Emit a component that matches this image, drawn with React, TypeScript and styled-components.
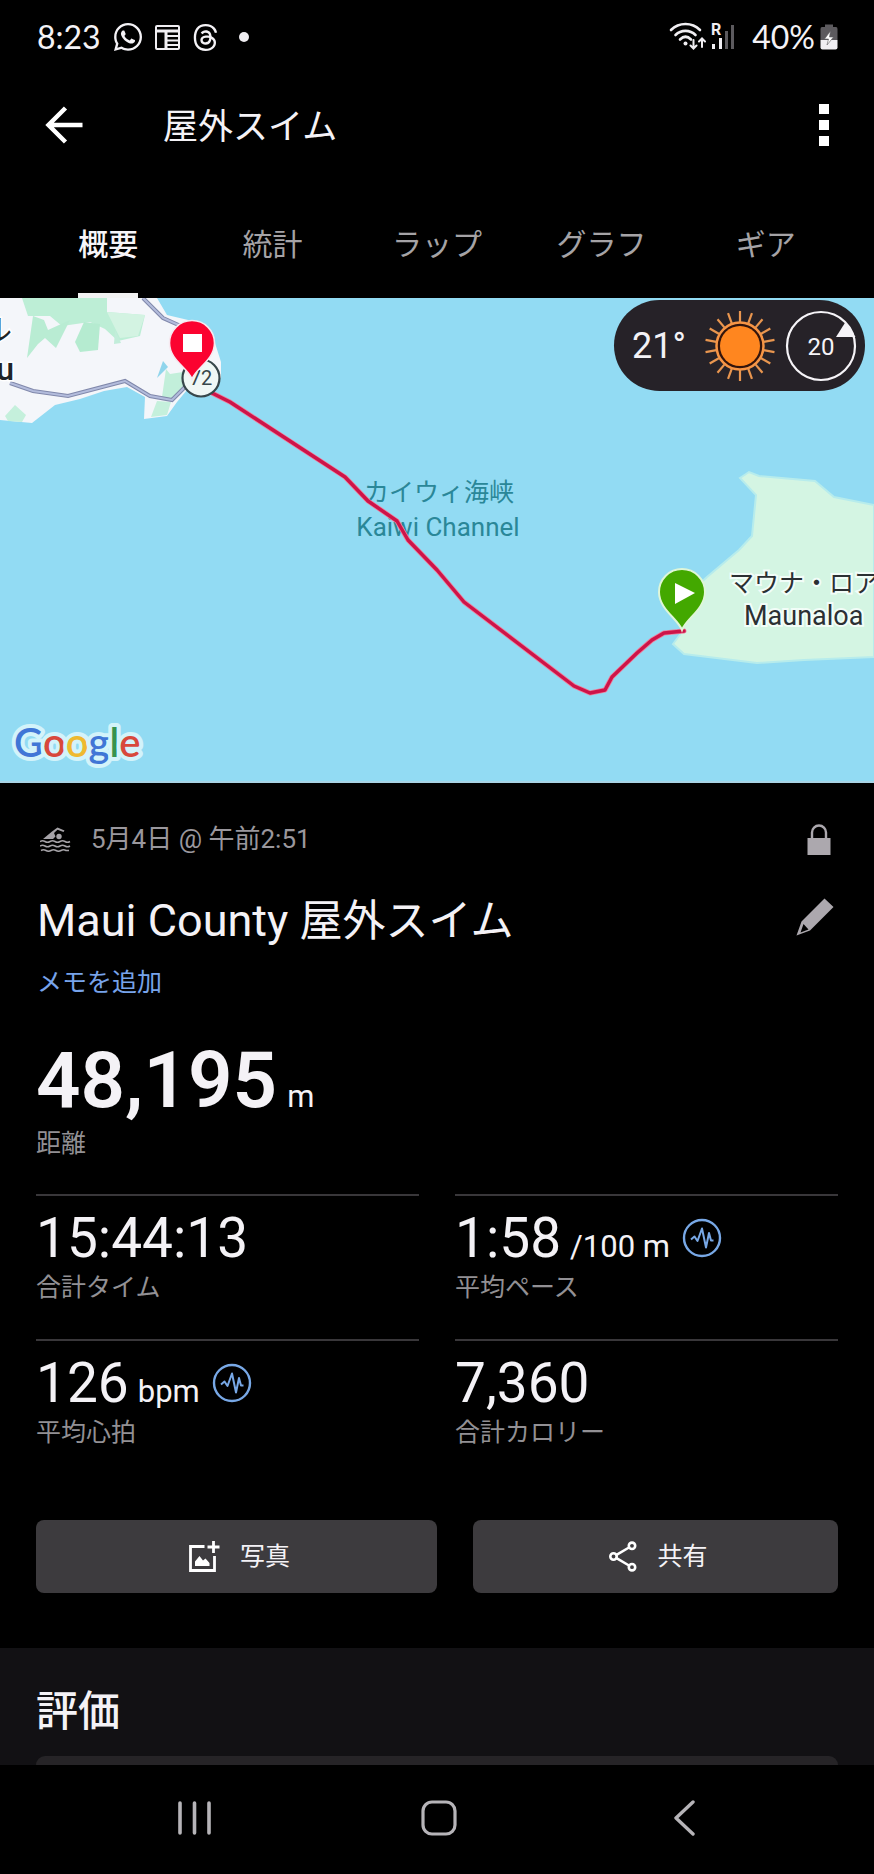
import React from 'react';
import styled, { createGlobalStyle } from 'styled-components';
import { FaWhatsapp, FaThreads } from 'react-icons/fa6';

const GlobalStyle = createGlobalStyle`
  *, *::before, *::after { box-sizing: border-box; }
  html, body { margin: 0; background: #000; }
  body {
    color: #f4f2f6;
    font-family: Roboto, "Noto Sans CJK JP", sans-serif;
  }
  button { font: inherit; color: inherit; background: none; border: 0; padding: 0; cursor: pointer; }
  svg { display: block; flex: none; }
  h1, h2, p, dl, dd { margin: 0; font-weight: 400; }
`;

const Screen = styled.div`
  display: flex;
  flex-direction: column;
  min-height: 100vh;
  background: #000;
`;

const StatusBar = styled.div`
  display: flex;
  justify-content: space-between;
  align-items: center;
  height: 74px;
  padding: 0 36px 0 37px;
  font-family: Lato, sans-serif;
  font-size: 32px;
  line-height: 40px;
`;

const StatusGroup = styled.div<{ $gap: number }>`
  display: flex;
  align-items: center;
  gap: ${(p) => p.$gap}px;
`;

const Percent = styled.span`
  margin-left: 12px;
`;

const AppBar = styled.header`
  display: flex;
  align-items: center;
  height: 102px;
  margin-bottom: 16px;
  padding: 0 36px 0 45px;
`;

const BarTitle = styled.h1`
  flex: 1;
  margin-left: 80px;
  padding-top: 6px;
  font-size: 35px;
  line-height: 48px;
`;

const Tabs = styled.nav`
  display: grid;
  grid-template-columns: repeat(5, 1fr);
  height: 106px;
  padding: 0 26px;
`;

const Tab = styled.button<{ $active?: boolean }>`
  justify-self: center;
  font-size: 30px;
  line-height: 40px;
  font-weight: ${(p) => (p.$active ? 500 : 400)};
  color: ${(p) => (p.$active ? '#f7f5f9' : '#a5a3a6')};
  box-shadow: ${(p) => (p.$active ? 'inset 0 -5px 0 #f2f2f2' : 'none')};
`;

const MapArea = styled.section`
  position: relative;
  height: 485px;
  overflow: hidden;
  background: #92dbf3;
  border-bottom: 2px solid #a9d4e6;
  & > svg { width: 100%; height: 485px; }
`;

const Weather = styled.div`
  position: absolute;
  top: 2px;
  right: 9px;
  display: flex;
  align-items: center;
  height: 91px;
  padding: 0 8px 0 18px;
  border-radius: 46px;
  background: #262228;
  font-size: 36px;
  line-height: 40px;
  & > svg:first-of-type { margin: 0 9px 0 18px; }
`;

const Details = styled.main`
  padding: 32px 36px 55px;
`;

const MetaRow = styled.div`
  display: flex;
  align-items: center;
  height: 48px;
  padding-left: 4px;
  font-size: 26px;
  line-height: 32px;
  color: #9a979d;
`;

const MetaText = styled.p`
  flex: 1;
  margin-left: 20px;
`;

const IconButton = styled.button<{ $inset: number }>`
  margin-right: ${(p) => p.$inset}px;
  color: #aca8ae;
`;

const TitleRow = styled.div`
  display: flex;
  align-items: flex-start;
  justify-content: space-between;
  margin-top: 30px;
  & > button { margin-top: 5px; }
`;

const Title = styled.h2`
  padding-left: 1px;
  font-size: 43px;
  line-height: 56px;
`;

const Latin = styled.span`
  font-size: 45px;
`;

const NoteLink = styled.a`
  display: block;
  width: max-content;
  margin-top: 18px;
  padding-left: 1px;
  font-size: 25px;
  line-height: 32px;
  color: #77a3ea;
  text-decoration: none;
`;

const Total = styled.dl`
  display: flex;
  flex-direction: column-reverse;
  margin: 42px 0 34px;
`;

const TotalValue = styled.dd`
  display: flex;
  align-items: baseline;
  gap: 10px;
  height: 80px;
  margin-bottom: 7px;
  font-size: 78px;
  line-height: 80px;
  font-weight: 600;
`;

const StatGrid = styled.div`
  display: grid;
  grid-template-columns: 1fr 1fr;
  column-gap: 36px;
`;

const Stat = styled.dl`
  display: flex;
  flex-direction: column-reverse;
  padding: 14px 0 35px;
  border-top: 2px solid #39373a;
`;

const StatValue = styled.dd`
  display: flex;
  align-items: baseline;
  gap: 9px;
  height: 56px;
  margin-bottom: 6px;
  font-size: 55px;
  line-height: 56px;
  & > svg { align-self: center; margin-left: 3px; }
`;

const Unit = styled.span`
  font-size: 31px;
  line-height: 40px;
  font-weight: 400;
`;

const Caption = styled.dt`
  font-size: 25px;
  line-height: 32px;
  color: #929094;
`;

const Actions = styled.div`
  display: flex;
  gap: 36px;
  margin-top: 36px;
`;

const Action = styled.button<{ $grow: number }>`
  display: flex;
  flex: ${(p) => p.$grow} 1 0;
  align-items: center;
  justify-content: center;
  gap: 20px;
  height: 73px;
  padding-left: 6px;
  border-radius: 8px;
  background: #3d3b3e;
  font-size: 25px;
  line-height: 32px;
`;

const Rating = styled.section`
  padding: 36px 36px 0;
  background: #121114;
`;

const RatingTitle = styled.h2`
  font-size: 42px;
  line-height: 56px;
  font-weight: 500;
`;

const RatingCard = styled.div`
  height: 9px;
  margin-top: 16px;
  border-radius: 14px 14px 0 0;
  background: #262427;
`;

const NavBar = styled.nav`
  display: grid;
  grid-template-columns: repeat(3, 1fr);
  justify-items: center;
  padding: 35px 68px 38px 72px;
  color: #b6b4b8;
`;

const NewsIcon = () => (
  <svg width="25" height="25" viewBox="0 0 25 25" fill="none" stroke="#f0eef2" strokeWidth="2">
    <rect x="1" y="1" width="23" height="23" rx="1" />
    <path d="M1 6H24" strokeWidth="3" />
    <path d="M11 7V24" strokeWidth="3" />
    <path d="M12 11H24M12 15.500H24M12 20H24" />
  </svg>
);

const WifiIcon = () => (
  <svg width="37" height="30" viewBox="0 0 37 30" fill="none" stroke="#f0eef2" strokeWidth="2.600" strokeLinecap="round">
    <path d="M2 8C10 0 23 0 31 8" />
    <path d="M6.500 13C12 7.500 21 7.500 26.500 13" />
    <path d="M11 17.500C14.500 14 18.500 14 22 17.500" />
    <circle cx="16.500" cy="21.500" r="2" fill="#f0eef2" stroke="none" />
    <path d="M24.500 18V26M21.500 23.500L24.500 26.500L27.500 23.500M33 25V17M30 19.500L33 16.500L36 19.500" strokeWidth="2" />
  </svg>
);

const SignalIcon = () => (
  <svg width="24" height="28" viewBox="0 0 24 28" fill="#f0eef2" overflow="visible">
    <text x="0" y="12" fontFamily="Roboto, sans-serif" fontSize="16" fontWeight="700">R</text>
    <rect x="1" y="21" width="3" height="5" />
    <rect x="8" y="15" width="3" height="11" />
    <rect x="14" y="8" width="3" height="18" fill="#5c5a5e" />
    <rect x="20" y="2" width="3" height="24" fill="#5c5a5e" />
  </svg>
);

const BatteryIcon = () => (
  <svg width="18" height="26" viewBox="0 0 18 26">
    <path d="M5 0.500H13V3H16Q17.500 3 17.500 5V16H0.500V5Q0.500 3 2 3H5Z" fill="#5c5a5e" />
    <path d="M0.500 16H17.500V23.500Q17.500 25.500 15.500 25.500H2.500Q0.500 25.500 0.500 23.500Z" fill="#f0eef2" />
    <path d="M10.500 7L4.500 15H8.500L7 21L13.500 13H9.500Z" fill="#fff" stroke="#5c5a5e" strokeWidth="0.600" />
  </svg>
);

const BackIcon = () => (
  <svg width="38" height="38" viewBox="0 0 38 38" fill="none" stroke="#fff" strokeWidth="4.500">
    <path d="M37.500 19H4M20.500 2L3.500 19L20.500 36" />
  </svg>
);

const MoreIcon = () => (
  <svg width="28" height="42" viewBox="0 0 28 42" fill="#fff">
    <rect x="9" y="0" width="10" height="10" />
    <rect x="9" y="16" width="10" height="10" />
    <rect x="9" y="32" width="10" height="10" />
  </svg>
);

const rays = Array.from({ length: 18 }, (_, i) => i * 20);

const SunIcon = () => (
  <svg width="72" height="72" viewBox="-36 -36 72 72">
    <circle r="23.500" fill="#33150c" stroke="#f79545" strokeWidth="2.500" />
    <circle r="20" fill="#ff861f" />
    {rays.map((angle) => (
      <path key={angle} d="M0 -24V-35" transform={`rotate(${angle})`} stroke="#e9964f" strokeWidth="2.200" />
    ))}
  </svg>
);

const WindIcon = () => (
  <svg width="72" height="72" viewBox="-36 -36 72 72">
    <circle r="34" fill="none" stroke="#f6f4f8" strokeWidth="2.200" />
    <path d="M24.500 -24L34.500 -9H15Z" fill="#f6f4f8" />
    <text x="0" y="9" textAnchor="middle" fontSize="24" fill="#f6f4f8">20</text>
  </svg>
);

const SwimIcon = () => (
  <svg width="31" height="25" viewBox="0 0 31 25" fill="none" stroke="#a6a3a8" strokeWidth="1.500">
    <path d="M3 12L12 4.500L17.500 0.500L24.500 3.500L23.500 5L17.500 2.800L14 6L15.500 9.500L13 12Z" fill="#a6a3a8" stroke="none" />
    <circle cx="19" cy="9.500" r="2.700" fill="#a6a3a8" stroke="none" />
    <path d="M0 14.500Q2.500 13 5 14.500T10 14.500T15 14.500T20 14.500T25 14.500T30 14.500" />
    <path d="M0 19Q2.500 17.500 5 19T10 19T15 19T20 19T25 19T30 19" />
    <path d="M1 23.500Q3.500 22 6 23.500T11 23.500T16 23.500T21 23.500T26 23.500L29 23.500" />
  </svg>
);

const LockIcon = () => (
  <svg width="24" height="31" viewBox="0 0 24 31">
    <path d="M5 15V8.500A7 7 0 0 1 19 8.500V15" fill="none" stroke="currentColor" strokeWidth="2.400" />
    <rect x="0.500" y="14" width="23" height="17" fill="currentColor" />
  </svg>
);

const PencilIcon = () => (
  <svg width="38" height="38" viewBox="0 0 38 38" fill="currentColor">
    <path d="M28.500 0.500L37.500 9L14 32.500L0.500 37.500L5.500 23.500ZM7.500 26L4.500 34.500L12.500 31.500Z" fillRule="evenodd" />
  </svg>
);

const PulseIcon = () => (
  <svg width="40" height="40" viewBox="0 0 40 40" fill="none" stroke="#78a8e6">
    <circle cx="20" cy="20" r="18" strokeWidth="2.400" />
    <path d="M9 21.500L12.500 18.500L15.500 23L20 10.500L24 29.500L27 15L29 22.500H31.500" strokeWidth="2" strokeLinejoin="round" />
  </svg>
);

const AddPhotoIcon = () => (
  <svg width="31" height="31" viewBox="0 0 31 31" fill="none" stroke="#fff" strokeWidth="2.800">
    <path d="M15.500 5.500H1.500V29.500H25.500V15" />
    <path d="M24.500 0V12M18.500 6H30.500" />
    <path d="M6 25V20.500L10.500 15L14 19.500L16.500 17.500L20.500 22V25Z" fill="#fff" stroke="none" />
  </svg>
);

const ShareIcon = () => (
  <svg width="28" height="31" viewBox="0 0 28 31" fill="none" stroke="#fff" strokeWidth="2.600">
    <circle cx="4.500" cy="15.500" r="3.200" />
    <circle cx="23" cy="4.800" r="3.200" />
    <circle cx="23" cy="26.200" r="3.200" />
    <path d="M7.500 13.800L20 6.500M7.500 17.200L20 24.500" />
  </svg>
);

const googleLetters: [string, string][] = [
  ['G', '#4076d6'],
  ['o', '#d8483b'],
  ['o', '#efb92f'],
  ['g', '#4076d6'],
  ['l', '#36934f'],
  ['e', '#d8483b'],
];

const RouteMap = () => (
  <svg viewBox="0 0 874 485" preserveAspectRatio="xMidYMid slice" role="img" aria-label="Kaiwi Channel">
    <path d="M0 0H157L167 17L205 26L215 45L221 64V80L187 92L177 104L167 118L144 121L145 99L127 89L104 93L80 101L55 107L32 125L0 122Z" fill="#f4f6fa" />
    <path d="M22 0H107V14L145 17L140 38L118 43L105 31L90 24L62 28L50 18H28Z" fill="#bdeed6" />
    <path d="M107 14L145 17L138 38L120 40Z" fill="#d3f3e2" />
    <path d="M33 18L44 22L48 32L70 22L56 50L45 40L38 46L27 60Z" fill="#b9ecd3" />
    <path d="M84 24L100 26L98 52L80 54L75 44Z" fill="#b5ebd0" />
    <path d="M115 32L121 45L114 46Z" fill="#c2edda" />
    <path d="M166 71L170 76L183 74V92L172 101L162 99Z" fill="#c2efda" />
    <path d="M157 103L171 104L167 117L151 119Z" fill="#c5f0dc" />
    <path d="M5 118L15 107L26 117L22 124L8 123Z" fill="#c5f0dc" />
    <path d="M163 63L168 69L157 80Z" fill="#8fd5ec" />
    <path d="M143 0L163 20L183 29M10 85L33 93L68 98L125 83L150 98L172 102L185 89" fill="none" stroke="#8088ab" strokeWidth="4" />
    <path d="M143 0L163 20L183 29M10 85L33 93L68 98L125 83L150 98L172 102L185 89" fill="none" stroke="#b3bcdc" strokeWidth="2" />
    <g fill="#202426" stroke="#fff" strokeWidth="3" paintOrder="stroke">
      <text x="12" y="42" textAnchor="end" fontSize="30">ル</text>
      <text x="14" y="82" textAnchor="end" fontSize="32" fontWeight="500">u</text>
    </g>

    <path d="M740 180L749 174L759 178L815 183L834 199L874 207V359L804 362L757 365L684 356L673 346L682 334V302L707 279L739 252L752 238L756 197Z" fill="#d4f5e3" stroke="#b7ecec" strokeWidth="2" />

    <g fill="#2a8798" textAnchor="middle">
      <text x="439" y="203" fontSize="25">カイウィ海峡</text>
      <text x="438" y="238" fontSize="26">Kaiwi Channel</text>
    </g>
    <g fill="#2b3033" stroke="#f2fdf8" strokeWidth="4" paintOrder="stroke">
      <text x="729" y="294" fontSize="25">マウナ・ロア</text>
      <text x="744" y="327" fontSize="27">Maunaloa</text>
    </g>

    <g fill="none" strokeLinejoin="round" strokeLinecap="round">
      <path d="M208 93L230 104L345 179L368 203L397 223L408 242L437 272L464 304L574 388L590 395L605 392L612 379L637 355L652 342L664 335L684 333" stroke="#ee7f9b" strokeWidth="5" />
      <path d="M208 93L230 104L345 179L368 203L397 223L408 242L437 272L464 304L574 388L590 395L605 392L612 379L637 355L652 342L664 335L684 333" stroke="#cd1449" strokeWidth="3.400" />
    </g>

    <circle cx="201" cy="80" r="18.500" fill="#eff7f5" stroke="#37474b" strokeWidth="2.200" />
    <text x="201" y="87" textAnchor="middle" fontSize="20" fill="#37474b">72</text>
    <path d="M192 81C188 70 169.500 62 169.500 45A22.500 22.500 0 0 1 214.500 45C214.500 62 196 70 192 81Z" fill="#fb0330" stroke="#f6e9f0" strokeWidth="1.600" />
    <rect x="183" y="36" width="19" height="18" fill="#fff" />
    <path d="M682 332C678 321 659 311 659 294A23 23 0 0 1 705 294C705 311 686 321 682 332Z" fill="#43a800" stroke="#dff6d8" strokeWidth="2" />
    <path d="M675 285L695 295L675 306Z" fill="#fff" />

    <text x="14" y="459" fontFamily="Lato, sans-serif" fontSize="40" fontWeight="600" stroke="#d3f3fa" strokeWidth="8" strokeLinejoin="round" paintOrder="stroke">
      {googleLetters.map(([letter, color], i) => (
        <tspan key={i} fill={color}>{letter}</tspan>
      ))}
    </text>
  </svg>
);

const tabs = ['概要', '統計', 'ラップ', 'グラフ', 'ギア'];

const stats = [
  { value: '15:44:13', label: '合計タイム' },
  { value: '1:58', unit: '/100 m', pulse: true, label: '平均ペース' },
  { value: '126', unit: 'bpm', pulse: true, label: '平均心拍' },
  { value: '7,360', label: '合計カロリー' },
];

export default function App() {
  return (
    <Screen>
      <GlobalStyle />
      <StatusBar>
        <StatusGroup $gap={11}>
          <span>8:23</span>
          <FaWhatsapp size={32} />
          <NewsIcon />
          <FaThreads size={29} />
          <svg width="26" height="10" viewBox="0 0 26 10"><circle cx="13" cy="5" r="5" fill="#f0eef2" /></svg>
        </StatusGroup>
        <StatusGroup $gap={5}>
          <WifiIcon />
          <SignalIcon />
          <Percent>40%</Percent>
          <BatteryIcon />
        </StatusGroup>
      </StatusBar>

      <AppBar>
        <button aria-label="戻る"><BackIcon /></button>
        <BarTitle>屋外スイム</BarTitle>
        <button aria-label="その他"><MoreIcon /></button>
      </AppBar>

      <Tabs role="tablist">
        {tabs.map((name, i) => (
          <Tab key={name} role="tab" aria-selected={i === 0} $active={i === 0}>{name}</Tab>
        ))}
      </Tabs>

      <MapArea>
        <RouteMap />
        <Weather>
          <span>21°</span>
          <SunIcon />
          <WindIcon />
        </Weather>
      </MapArea>

      <Details>
        <MetaRow>
          <SwimIcon />
          <MetaText>5月4日 @ 午前2:51</MetaText>
          <IconButton $inset={7} aria-label="プライバシー"><LockIcon /></IconButton>
        </MetaRow>
        <TitleRow>
          <Title><Latin>Maui County </Latin>屋外スイム</Title>
          <IconButton $inset={4} aria-label="編集"><PencilIcon /></IconButton>
        </TitleRow>
        <NoteLink href="#note">メモを追加</NoteLink>

        <Total>
          <Caption>距離</Caption>
          <TotalValue>48,195<Unit>m</Unit></TotalValue>
        </Total>

        <StatGrid>
          {stats.map((s) => (
            <Stat key={s.label}>
              <Caption>{s.label}</Caption>
              <StatValue>
                {s.value}
                {s.unit && <Unit>{s.unit}</Unit>}
                {s.pulse && <PulseIcon />}
              </StatValue>
            </Stat>
          ))}
        </StatGrid>

        <Actions>
          <Action $grow={11}><AddPhotoIcon />写真</Action>
          <Action $grow={10}><ShareIcon />共有</Action>
        </Actions>
      </Details>

      <Rating>
        <RatingTitle>評価</RatingTitle>
        <RatingCard />
      </Rating>

      <NavBar>
        <button aria-label="最近">
          <svg width="36" height="36" viewBox="0 0 36 36" stroke="currentColor" strokeWidth="3.600" strokeLinecap="round">
            <path d="M4 3V33M18.500 3V33M33 3V33" />
          </svg>
        </button>
        <button aria-label="ホーム">
          <svg width="36" height="36" viewBox="0 0 36 36" fill="none" stroke="currentColor" strokeWidth="3.200">
            <rect x="2" y="2" width="32" height="32" rx="9" />
          </svg>
        </button>
        <button aria-label="戻る">
          <svg width="36" height="36" viewBox="0 0 36 36" fill="none" stroke="currentColor" strokeWidth="3.400" strokeLinecap="round" strokeLinejoin="round">
            <path d="M27 2L10 18L27 34" />
          </svg>
        </button>
      </NavBar>
    </Screen>
  );
}
